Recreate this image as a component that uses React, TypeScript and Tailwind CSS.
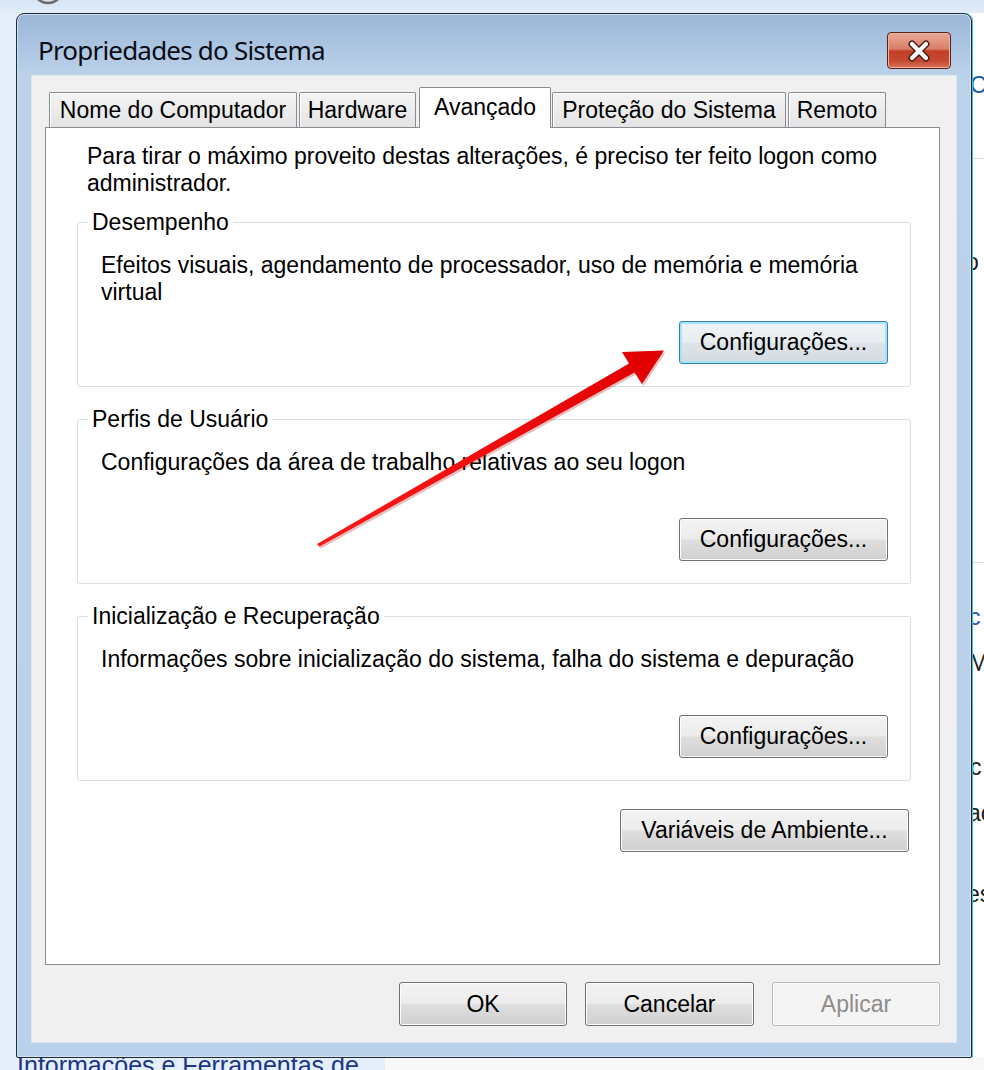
import React from "react";

const btnBase =
  "flex items-center justify-center rounded-[3px] text-[23px] leading-[27px]";
const btnNormal =
  btnBase +
  " border border-[#707070] text-black bg-[linear-gradient(to_bottom,#f3f3f3_0%,#ececec_48%,#dedede_52%,#d0d0d0_100%)] shadow-[inset_0_0_0_1px_#fcfcfc]";
const btnFocus =
  btnBase +
  " border border-[#3c7fb1] text-black bg-[linear-gradient(to_bottom,#f1f4f6_0%,#e8edf1_48%,#dde4e9_52%,#d3dce2_100%)] shadow-[inset_0_0_0_2px_#a7e2fb]";
const btnDisabled =
  btnBase + " border border-[#b5b8bb] text-[#8d8d8d] bg-[#f4f4f4] shadow-[inset_0_0_0_1px_#fbfbfb]";

function Group({
  title,
  lines,
  focused,
}: {
  title: string;
  lines: string[];
  focused?: boolean;
}) {
  return (
    <fieldset className="rounded-[3px] border border-[#d5dfe5] pb-[22px]">
      <legend className="ml-[10px] px-[4px] text-[23px] leading-[27px] text-black">
        {title}
      </legend>
      <div className="pt-[16px] pl-[23px] min-h-[70px] text-[23px] leading-[27px] text-black">
        {lines.map((l, i) => (
          <div key={i}>{l}</div>
        ))}
      </div>
      <div className="mt-[15px] flex justify-end pr-[22px]">
        <button className={(focused ? btnFocus : btnNormal) + " w-[209px] h-[43px]"}>
          Configurações...
        </button>
      </div>
    </fieldset>
  );
}

function Tab({ label, w, ml }: { label: string; w: string; ml: string }) {
  return (
    <div
      className={
        "mb-px h-[35px] flex items-center justify-center border border-b-0 border-[#898c95] rounded-t-[2px] bg-[linear-gradient(to_bottom,#f4f4f4,#e4e4e4)] shadow-[inset_1px_1px_0_#ffffff] text-[23px] leading-[27px] text-black " +
        w +
        " " +
        ml
      }
    >
      {label}
    </div>
  );
}

export default function App() {
  return (
    <div className="relative w-[984px] h-[1070px] overflow-hidden bg-white font-['Liberation_Sans',Arial,sans-serif]">
      {/* desktop background */}
      <div className="absolute left-0 top-0 w-[984px] h-[13px] bg-[linear-gradient(to_bottom,#d6e4f3,#e2edf8)]">
        <svg className="absolute left-[30px] top-[-20px]" width="36" height="26" viewBox="0 0 36 26">
          <circle cx="18" cy="8" r="15" fill="none" stroke="#6b6b6b" strokeWidth="2.5" />
        </svg>
      </div>
      <div className="absolute left-0 top-[13px] w-[17px] h-[1045px] bg-[#e5eff9]" />
      <div className="absolute left-0 top-[1057px] w-[385px] h-[13px] bg-[#e5eff9]" />
      <div className="absolute left-[385px] top-[1057px] w-[599px] h-[13px] bg-[#f8f8f8]" />
      <div className="absolute left-[17px] top-[1051px] text-[25px] leading-[29px] text-[#1c3586] whitespace-nowrap">
        Informações e Ferramentas de
      </div>
      {/* background window peeking right */}
      <div className="absolute left-[940px] top-[13px] w-[44px] h-[1044px] bg-white text-[23px] leading-[27px]">
        <div className="absolute left-[30px] top-[59px] text-[#2458a8]">C</div>
        <div className="absolute left-0 top-[145px] w-[44px] h-px bg-[#dadada]" />
        <div className="absolute left-[26px] top-[236px] text-[#1b1b1b]">o</div>
        <div className="absolute left-0 top-[549px] w-[44px] h-px bg-[#dadada]" />
        <div className="absolute left-[29px] top-[591px] text-[#2458a8]">c</div>
        <div className="absolute left-[29px] top-[637px] text-[#1b1b1b]">M</div>
        <div className="absolute left-[30px] top-[741px] text-[#1b1b1b]">c</div>
        <div className="absolute left-[28px] top-[787px] text-[#1b1b1b]">ac</div>
        <div className="absolute left-[27px] top-[868px] text-[#1b1b1b]">es</div>
      </div>

      {/* dialog window */}
      <div className="absolute left-[16px] top-[13px] z-10 w-[956px] h-[1045px] flex flex-col rounded-t-[8px] rounded-b-[2px] border border-[#1e2b38] bg-[linear-gradient(to_bottom,#9ab5d6_0px,#adc6e2_35px,#bcd2ea_62px,#b9d1ea_100%)] shadow-[inset_0_0_0_1px_#d2e2f2,1px_0_0_#35c5d6]">
        {/* title bar */}
        <div className="h-[61px] flex justify-between pl-[21px] pr-[20px]">
          <div className="pt-[21px] text-[26px] leading-[30px] text-[#0c0c14] font-['Noto_Sans','Open_Sans',sans-serif] tracking-[-0.8px]">
            Propriedades do Sistema
          </div>
          <div className="mt-[18px] w-[64px] h-[37px] rounded-[4px] border border-[#5b2219] bg-[linear-gradient(to_bottom,#e8a997_0%,#d8806a_45%,#c13f27_52%,#c44a30_80%,#d9765a_100%)] shadow-[inset_0_0_0_1px_#eab3a3] flex items-center justify-center">
            <svg width="30" height="24" viewBox="0 0 30 24">
              <path d="M8 5 L22 19 M22 5 L8 19" stroke="#4a1a12" strokeWidth="7" strokeLinecap="round" />
              <path d="M8 5 L22 19 M22 5 L8 19" stroke="#ffffff" strokeWidth="4.2" strokeLinecap="round" />
            </svg>
          </div>
        </div>

        {/* client area */}
        <div className="mx-[14px] mb-[14px] flex-1 flex flex-col border border-[#dfe7f0] bg-[#f0f0f0] pl-[13px] pr-[16px] pt-[11px]">
          {/* tabs */}
          <div className="relative z-10 -mb-px flex items-end h-[41px]">
            <Tab label="Nome do Computador" w="w-[248px]" ml="ml-[4px]" />
            <Tab label="Hardware" w="w-[117px]" ml="ml-[2px]" />
            <div className="ml-[3px] w-[132px] h-[41px] flex items-start justify-center pt-[6px] border border-b-0 border-[#898c95] rounded-t-[2px] bg-white text-[23px] leading-[27px] text-black">
              Avançado
            </div>
            <Tab label="Proteção do Sistema" w="w-[234px]" ml="ml-[1px]" />
            <Tab label="Remoto" w="w-[98px]" ml="ml-[2px]" />
          </div>

          {/* tab panel */}
          <div className="h-[838px] flex flex-col border border-[#898c95] bg-white pt-[15px] pl-[31px] pr-[28px]">
            <div className="ml-[10px] text-[23px] leading-[27px] text-black">
              Para tirar o máximo proveito destas alterações, é preciso ter feito logon como
              <br />
              administrador.
            </div>
            <div className="mt-[12px]">
              <Group
                title="Desempenho"
                lines={[
                  "Efeitos visuais, agendamento de processador, uso de memória e memória",
                  "virtual",
                ]}
                focused
              />
            </div>
            <div className="mt-[19px]">
              <Group
                title="Perfis de Usuário"
                lines={["Configurações da área de trabalho relativas ao seu logon"]}
              />
            </div>
            <div className="mt-[19px]">
              <Group
                title="Inicialização e Recuperação"
                lines={["Informações sobre inicialização do sistema, falha do sistema e depuração"]}
              />
            </div>
            <div className="mt-[28px] flex justify-end pr-[2px]">
              <button className={btnNormal + " w-[289px] h-[43px]"}>Variáveis de Ambiente...</button>
            </div>
          </div>

          {/* footer buttons */}
          <div className="mt-[17px] flex justify-end gap-[18px]">
            <button className={btnNormal + " w-[168px] h-[44px]"}>OK</button>
            <button className={btnNormal + " w-[169px] h-[44px]"}>Cancelar</button>
            <button className={btnDisabled + " w-[168px] h-[44px]"}>Aplicar</button>
          </div>
        </div>
      </div>

      {/* red annotation arrow */}
      <svg className="absolute left-0 top-0 z-20 pointer-events-none" width="984" height="1070" viewBox="0 0 984 1070">
        <defs>
          <linearGradient id="arrowGrad" x1="0" y1="1" x2="1" y2="0">
            <stop offset="0" stopColor="#ff1a1a" />
            <stop offset="1" stopColor="#e00000" />
          </linearGradient>
        </defs>
        <polygon
          points="317,544 629,363.5 622,352 664,350.5 642,384 634.5,372.5 319.5,546.5"
          fill="#9a0000"
          opacity="0.25"
          transform="translate(1.5,2)"
        />
        <polygon
          points="317,544 629,363.5 622,352 664,350.5 642,384 634.5,372.5 319.5,546.5"
          fill="url(#arrowGrad)"
        />
      </svg>
    </div>
  );
}
